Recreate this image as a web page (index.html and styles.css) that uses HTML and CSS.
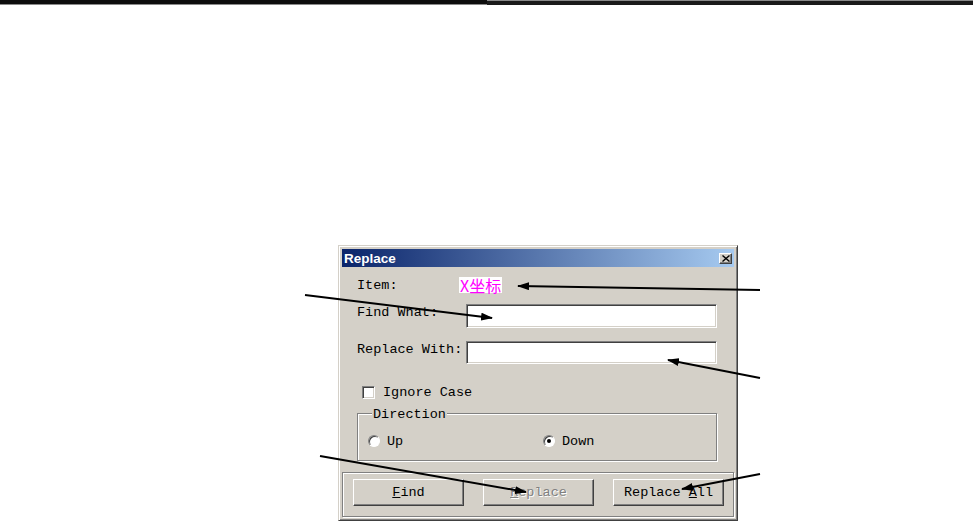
FILE: index.html
```html
<!DOCTYPE html>
<html lang="en">
  <head>
    <meta charset="UTF-8" />
    <title>Replace</title>
    <link rel="stylesheet" href="styles.css">
  </head>
  <body>
    <div class="topbar">
      <span class="topbar-left"></span>
      <span class="topbar-right"></span>
    </div>

    <div class="window">
      <div class="titlebar">
        <span class="title">Replace</span>
        <span class="close-btn">
          <svg width="8" height="7" viewBox="0 0 8 7">
            <path d="M0.5 0.5 L7.5 6.5 M7.5 0.5 L0.5 6.5" stroke="#000" stroke-width="1.4" fill="none" />
          </svg>
        </span>
      </div>

      <div class="content">
        <div class="row row-item">
          <span class="label">Item:</span>
          <span class="item-value">X坐标</span>
        </div>
        <div class="row row-find">
          <span class="label">Find What:</span>
          <div class="textbox"></div>
        </div>
        <div class="row row-replace">
          <span class="label">Replace With:</span>
          <div class="textbox"></div>
        </div>
        <div class="check-row">
          <span class="checkbox"></span>
          <span>Ignore Case</span>
        </div>
        <fieldset class="group">
          <legend>Direction</legend>
          <div class="radio-row">
            <div class="radio-item radio-up">
              <span class="radio"></span>
              <span>Up</span>
            </div>
            <div class="radio-item">
              <span class="radio checked"></span>
              <span>Down</span>
            </div>
          </div>
        </fieldset>
      </div>

      <div class="button-frame">
        <button class="btn"><u>F</u>ind</button>
        <button class="btn" disabled><u>R</u>eplace</button>
        <button class="btn">Replace <u>A</u>ll</button>
      </div>
    </div>

    <svg class="arrows" width="973" height="521" viewBox="0 0 973 521">
      <defs>
        <marker id="head" viewBox="0 0 12 8" refX="11" refY="4" markerWidth="12" markerHeight="8" markerUnits="userSpaceOnUse" orient="auto">
          <path d="M0 0 L12 4 L0 8 z" fill="#000" />
        </marker>
      </defs>
      <g stroke="#000" stroke-width="2" fill="none" marker-end="url(#head)">
        <line x1="305" y1="295" x2="492" y2="318" />
        <line x1="760" y1="290" x2="518" y2="286" />
        <line x1="760" y1="378" x2="668" y2="360" />
        <line x1="320" y1="456" x2="526" y2="492" />
        <line x1="760" y1="474" x2="682" y2="489" />
      </g>
    </svg>
  </body>
</html>
```

FILE: styles.css
```css
* {
  box-sizing: border-box;
}

html,
body {
  margin: 0;
  padding: 0;
  width: 973px;
  height: 521px;
  overflow: hidden;
  background: #fff;
}

body {
  font-family: "Liberation Mono", "DejaVu Sans Mono", monospace;
  font-size: 13.5px;
  color: #000;
}

/* top rule */
.topbar {
  display: flex;
  height: 5px;
}

.topbar-left {
  width: 487px;
  background: #0d0d0d;
  border-bottom: 1px solid #8a8a8a;
}

.topbar-right {
  flex: 1;
  background: #1a1a1a;
  border-top: 1px solid #8a8a8a;
}

/* dialog */
.window {
  margin: 240px 0 0 338px;
  width: 400px;
  height: 276px;
  padding: 3px;
  background: #d4d0c8;
  border: 1px solid;
  border-color: #d4d0c8 #404040 #404040 #d4d0c8;
  box-shadow: inset 1px 1px 0 #fff, inset -1px -1px 0 #808080;
  display: flex;
  flex-direction: column;
}

.titlebar {
  height: 18px;
  display: flex;
  align-items: center;
  justify-content: space-between;
  padding: 0 2px;
  background: linear-gradient(to right, #0a246a, #a6caf0);
}

.title {
  font-family: "Liberation Sans", Arial, sans-serif;
  font-weight: bold;
  font-size: 13.5px;
  color: #fff;
}

.close-btn {
  width: 13px;
  height: 11px;
  display: flex;
  align-items: center;
  justify-content: center;
  background: #d4d0c8;
  border: 1px solid;
  border-color: #fff #404040 #404040 #fff;
  box-shadow: inset -1px -1px 0 #808080;
}

.content {
  padding: 9px 17px 0 15px;
}

.row {
  display: flex;
  align-items: flex-start;
}

.label {
  width: 109px;
  line-height: 18px;
  white-space: pre;
}

.row-item {
  height: 18px;
  align-items: center;
}

.row-item .label {
  width: 102px;
  padding-top: 2px;
}

.item-value {
  background: #fff;
  color: #ff00ff;
  font-family: "Noto Sans CJK SC", sans-serif;
  font-size: 16px;
  line-height: 16px;
  padding: 0 1px;
}

.row-find {
  margin-top: 10px;
}

.row-replace {
  margin-top: 13px;
}

.textbox {
  width: 251px;
  height: 24px;
  background: #fff;
  border: 1px solid;
  border-color: #808080 #fff #fff #808080;
  box-shadow: inset 1px 1px 0 #404040, inset -1px -1px 0 #d4d0c8;
}

.row-replace .textbox {
  height: 23px;
}

.check-row {
  display: flex;
  align-items: center;
  gap: 8px;
  height: 13px;
  margin: 22px 0 0 5px;
}

.checkbox {
  width: 13px;
  height: 13px;
  background: #fff;
  border: 1px solid;
  border-color: #808080 #fff #fff #808080;
  box-shadow: inset 1px 1px 0 #404040, inset -1px -1px 0 #d4d0c8;
}

.group {
  margin: 4px 0 0 0;
  width: 360px;
  padding: 10px 10px 11px 10px;
  border: 1px solid #808080;
  box-shadow: inset 1px 1px 0 #fff, 1px 1px 0 #fff;
}

.group legend {
  padding: 4px 1px 0 1px;
  margin-left: 4px;
  line-height: 16px;
  background: #d4d0c8;
}

.radio-row {
  display: flex;
  align-items: center;
  height: 16px;
}

.radio-item {
  display: flex;
  align-items: center;
  gap: 7px;
}

.radio-up {
  width: 175px;
}

.radio {
  position: relative;
  width: 12px;
  height: 12px;
  border-radius: 50%;
  background: #fff;
  border: 1px solid;
  border-color: #808080 #fff #fff #808080;
  box-shadow: inset 1px 1px 0 #404040;
}

.radio.checked::after {
  content: "";
  position: absolute;
  left: 3px;
  top: 3px;
  width: 4px;
  height: 4px;
  border-radius: 50%;
  background: #000;
}

.button-frame {
  margin-top: auto;
  height: 45px;
  display: flex;
  gap: 19px;
  padding: 6px 0 0 10px;
  border: 1px solid #808080;
  box-shadow: inset 1px 1px 0 #fff, 1px 1px 0 #fff;
}

.btn {
  width: 111px;
  height: 27px;
  padding: 0;
  font-family: "Liberation Mono", "DejaVu Sans Mono", monospace;
  font-size: 13.5px;
  color: #000;
  background: #d4d0c8;
  border: 1px solid;
  border-color: #fff #404040 #404040 #fff;
  box-shadow: inset -1px -1px 0 #808080;
  border-radius: 0;
}

.btn:disabled {
  color: #808080;
  text-shadow: 1px 1px 0 #fff;
}

/* callout arrows */
.arrows {
  position: absolute;
  left: 0;
  top: 0;
  pointer-events: none;
}
```
